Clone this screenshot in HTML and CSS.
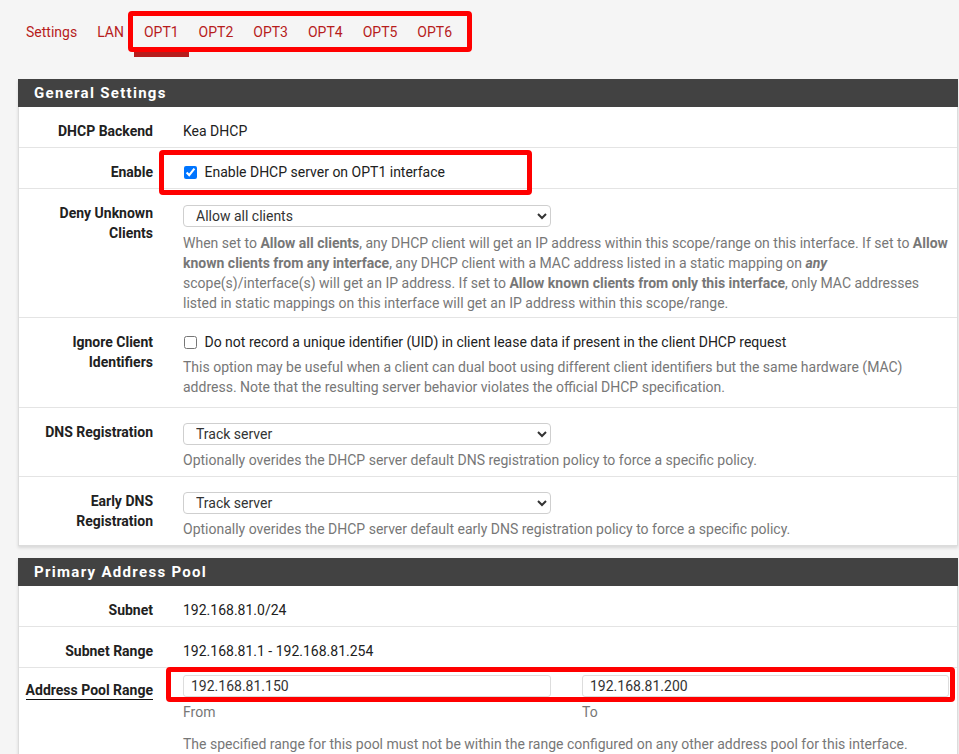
FILE: index.html
```html
<!DOCTYPE html>
<html lang="en">

<head>
    <meta charset="UTF-8">
    <meta name="viewport" content="width=device-width, initial-scale=1.0">
    <title>DHCP Server</title>
    <link rel="stylesheet" href="styles.css">
</head>

<body>

    <ul class="tabs">
        <li><a href="#">Settings</a></li>
        <li><a href="#">LAN</a></li>
        <li><a href="#" class="active">OPT1</a></li>
        <li><a href="#">OPT2</a></li>
        <li><a href="#">OPT3</a></li>
        <li><a href="#">OPT4</a></li>
        <li><a href="#">OPT5</a></li>
        <li><a href="#">OPT6</a></li>
    </ul>

    <div class="panel">
        <h2 class="panel-heading">General Settings</h2>

        <div class="row">
            <label class="row-label">DHCP Backend</label>
            <div class="row-value">Kea DHCP</div>
        </div>

        <div class="row">
            <label class="row-label">Enable</label>
            <div class="row-value">
                <label class="check"><input type="checkbox" checked> Enable DHCP server on OPT1 interface</label>
            </div>
        </div>

        <div class="row row-deny">
            <label class="row-label">Deny Unknown Clients</label>
            <div class="row-value">
                <select class="field">
                    <option>Allow all clients</option>
                </select>
                <p class="help">When set to <b>Allow all clients</b>, any DHCP client will get an IP address within this scope/range on this interface. If set to <b>Allow known clients from any interface</b>, any DHCP client with a MAC address listed in a static mapping on <b><i>any</i></b> scope(s)/interface(s) will get an IP address. If set to <b>Allow known clients from only this interface</b>, only MAC addresses listed in static mappings on this interface will get an IP address within this scope/range.</p>
            </div>
        </div>

        <div class="row row-loose">
            <label class="row-label">Ignore Client Identifiers</label>
            <div class="row-value">
                <label class="check"><input type="checkbox"> Do not record a unique identifier (UID) in client lease data if present in the client DHCP request</label>
                <p class="help">This option may be useful when a client can dual boot using different client identifiers but the same hardware (MAC) address. Note that the resulting server behavior violates the official DHCP specification.</p>
            </div>
        </div>

        <div class="row">
            <label class="row-label">DNS Registration</label>
            <div class="row-value">
                <select class="field">
                    <option>Track server</option>
                </select>
                <p class="help">Optionally overides the DHCP server default DNS registration policy to force a specific policy.</p>
            </div>
        </div>

        <div class="row">
            <label class="row-label">Early DNS Registration</label>
            <div class="row-value">
                <select class="field">
                    <option>Track server</option>
                </select>
                <p class="help">Optionally overides the DHCP server default early DNS registration policy to force a specific policy.</p>
            </div>
        </div>
    </div>

    <div class="panel">
        <h2 class="panel-heading">Primary Address Pool</h2>

        <div class="row">
            <label class="row-label">Subnet</label>
            <div class="row-value">192.168.81.0/24</div>
        </div>

        <div class="row">
            <label class="row-label">Subnet Range</label>
            <div class="row-value">192.168.81.1 - 192.168.81.254</div>
        </div>

        <div class="row row-range">
            <label class="row-label"><span class="tip">Address Pool Range</span></label>
            <div class="row-value">
                <div class="pair">
                    <div>
                        <input class="field" type="text" value="192.168.81.150">
                        <p class="help small">From</p>
                    </div>
                    <div>
                        <input class="field" type="text" value="192.168.81.200">
                        <p class="help small">To</p>
                    </div>
                </div>
                <p class="help note">The specified range for this pool must not be within the range configured on any other address pool for this interface.</p>
            </div>
        </div>
    </div>

    <!-- red marks drawn over the screenshot -->
    <span class="mark mark-tabs"></span>
    <span class="mark mark-enable"></span>
    <span class="mark mark-range"></span>

</body>

</html>
```

FILE: styles.css
```css
body {
    margin: 0;
    background-color: #f5f5f5;
    font-family: Roboto, "Liberation Sans", sans-serif;
    font-size: 14px;
    line-height: 20px;
    color: #212121;
}

.tabs {
    list-style: none;
    margin: 10px 0 22px;
    padding: 0 0 0 16px;
    display: flex;
}

.tabs a {
    display: block;
    padding: 12px 10px 10px;
    border-bottom: 5px solid transparent;
    color: #b71c1c;
    text-decoration: none;
}

.tabs a.active {
    border-bottom-color: #b71c1c;
}

.panel {
    width: 940px;
    box-sizing: border-box;
    margin: 0 0 12px 18px;
    background-color: #fff;
    border: 1px solid #dcdcdc;
    border-top: none;
    box-shadow: 0 2px 3px rgba(0, 0, 0, 0.12);
}

.panel-heading {
    margin: 0 -1px;
    padding: 4px 16px;
    background-color: #424242;
    color: #fff;
    font-size: 15px;
    font-weight: bold;
    line-height: 20px;
    letter-spacing: 1.3px;
}

.row {
    display: grid;
    grid-template-columns: 134px 766px;
    column-gap: 30px;
    padding: 14px 8px 6px 0;
    border-bottom: 1px solid #e4e4e4;
}

.row:last-child {
    border-bottom: none;
}

.row-loose {
    padding-bottom: 10px;
}

.row-label {
    text-align: right;
    font-weight: bold;
    color: #212121;
}

.check input {
    margin: 0 4px 0 1px;
    width: 13px;
    height: 13px;
    vertical-align: -2px;
}

.field {
    display: block;
    box-sizing: border-box;
    width: 368px;
    height: 22px;
    margin-top: 1px;
    padding: 0 0 0 8px;
    border: 1px solid #cfcfcf;
    border-radius: 4px;
    background-color: #fff;
    font-family: Roboto, "Liberation Sans", sans-serif;
    font-size: 14px;
    color: #333;
}

.help {
    margin: 5px 0 0;
    color: #777;
}

.row-deny {
    padding-bottom: 4px;
}

.row-deny .field {
    margin-top: 2px;
}

.row-deny .help {
    margin-top: 6px;
}

.row-range {
    padding-top: 7px;
}

.row-range .row-label {
    margin-top: 5px;
}

.row-range .field {
    margin-top: 0;
    height: 22px;
    border-radius: 3px;
    border-color: #ddd;
    padding-left: 7px;
    width: 100%;
}

.pair {
    display: grid;
    grid-template-columns: 368px 367px;
    column-gap: 31px;
}

.help.small {
    margin-top: 5px;
}

.help.note {
    margin-top: 12px;
    padding-bottom: 20px;
}

.tip {
    border-bottom: 1px solid #111;
    padding-bottom: 1px;
}

.mark {
    position: absolute;
    box-sizing: border-box;
    border: 5px solid #ff0000;
    border-radius: 4px;
}

.mark-tabs {
    left: 128px;
    top: 11px;
    width: 344px;
    height: 41px;
}

.mark-enable {
    left: 159px;
    top: 150px;
    width: 373px;
    height: 45px;
}

.mark-range {
    left: 166px;
    top: 667px;
    width: 789px;
    height: 35px;
}
```
